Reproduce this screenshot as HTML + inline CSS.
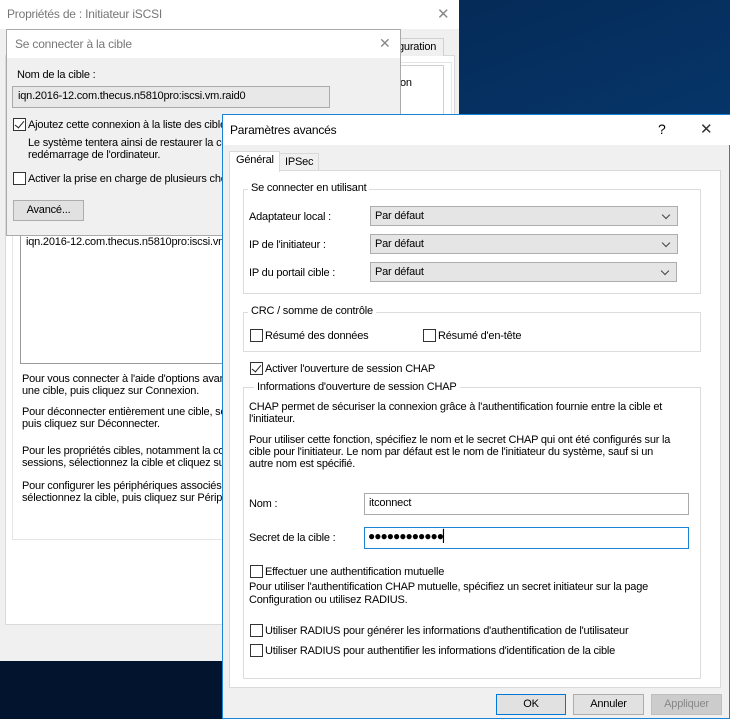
<!DOCTYPE html>
<html><head><meta charset="utf-8">
<style>
*{margin:0;padding:0;box-sizing:border-box}
body{width:730px;height:719px;overflow:hidden;position:relative;font-family:"Liberation Sans",sans-serif;font-size:11px;letter-spacing:-0.2px;color:#000;background:linear-gradient(160deg,#04234a 0%,#06386e 45%,#0a5aa6 100%)}
.a{position:absolute;white-space:nowrap}
.box{position:absolute}
.cb{position:absolute;width:13px;height:13px;border:1px solid #333;background:#fff}
.cb.on::after{content:"";position:absolute;left:3px;top:0px;width:4px;height:8px;border:solid #222;border-width:0 1.5px 1.5px 0;transform:rotate(40deg)}
.grp{position:absolute;border:1px solid #dcdcdc}
.lg{position:absolute;background:#fff;padding:0 3px;white-space:nowrap}
.combo{position:absolute;background:#e5e5e5;border:1px solid #adadad;height:20px;padding:3px 4px 0}
.combo::after{content:"";position:absolute;right:8px;top:5px;width:5px;height:5px;border:solid #444;border-width:0 1px 1px 0;transform:rotate(45deg)}
.btn{position:absolute;background:#e1e1e1;border:1px solid #adadad;height:21px;text-align:center;line-height:19px}
</style></head><body>
<!-- back window -->
<div class="box" style="left:0;top:0;width:459px;height:661px;background:#f0f0f0"></div>
<div class="box" style="left:0;top:0;width:459px;height:29px;background:#fff"></div>
<div class="a" style="left:7px;top:7px;font-size:12px;color:#777">Propriétés de : Initiateur iSCSI</div>
<div class="a" style="left:437px;top:5px;font-size:15px;color:#888">✕</div>
<div class="box" style="left:5px;top:55px;width:450px;height:570px;background:#fff;border:1px solid #d9d9d9"></div>
<div class="box" style="left:392px;top:38px;width:52px;height:18px;background:#f0f0f0;border:1px solid #d0d0d0;border-bottom:none"></div>
<div class="a" style="left:398px;top:41px">guration</div>
<div class="box" style="left:12px;top:62px;width:440px;height:478px;border:1px solid #e5e5e5"></div>
<div class="box" style="left:392px;top:65px;width:52px;height:268px;border:1px solid #d0d0d0"></div>
<div class="a" style="left:400px;top:77px">on</div>
<div class="box" style="left:20px;top:228px;width:210px;height:136px;background:#fff;border:1px solid #999"></div>
<div class="a" style="left:26px;top:236px">iqn.2016-12.com.thecus.n5810pro:iscsi.vm</div>
<div class="a" style="left:22px;top:373px;line-height:12px">Pour vous connecter à l'aide d'options avan<br>une cible, puis cliquez sur Connexion.</div>
<div class="a" style="left:22px;top:406px;line-height:12px">Pour déconnecter entièrement une cible, sé<br>puis cliquez sur Déconnecter.</div>
<div class="a" style="left:22px;top:445px;line-height:12px">Pour les propriétés cibles, notamment la cor<br>sessions, sélectionnez la cible et cliquez sur</div>
<div class="a" style="left:22px;top:480px;line-height:12px">Pour configurer les périphériques associés à<br>sélectionnez la cible, puis cliquez sur Périphe</div>
<div class="box" style="left:0;top:661px;width:222px;height:58px;background:#02142e"></div>

<!-- se connecter dialog -->
<div class="box" style="left:6px;top:29px;width:395px;height:207px;background:#f0f0f0;border:1px solid #aaa"></div>
<div class="box" style="left:7px;top:30px;width:393px;height:28px;background:#fff"></div>
<div class="a" style="left:15px;top:37px;font-size:12px;color:#777">Se connecter à la cible</div>
<div class="a" style="left:379px;top:35px;font-size:14px;color:#888">✕</div>
<div class="a" style="left:17px;top:69px">Nom de la cible :</div>
<div class="box" style="left:12px;top:86px;width:318px;height:22px;background:#e8e8e8;border:1px solid #aaa"></div>
<div class="a" style="left:18px;top:90px">iqn.2016-12.com.thecus.n5810pro:iscsi.vm.raid0</div>
<div class="cb on" style="left:13px;top:118px"></div>
<div class="a" style="left:28px;top:119px">Ajoutez cette connexion à la liste des cible</div>
<div class="a" style="left:28px;top:137px;line-height:12px">Le système tentera ainsi de restaurer la co<br>redémarrage de l'ordinateur.</div>
<div class="cb" style="left:13px;top:172px"></div>
<div class="a" style="left:28px;top:173px">Activer la prise en charge de plusieurs che</div>
<div class="btn" style="left:13px;top:200px;width:71px">Avancé...</div>

<!-- parametres avances -->
<div class="box" style="left:222px;top:114px;width:508px;height:605px;background:#f0f0f0;border:1px solid #1883d7"></div>
<div class="box" style="left:223px;top:115px;width:507px;height:30px;background:#fff"></div>
<div class="a" style="left:230px;top:123px;font-size:12px">Paramètres avancés</div>
<div class="a" style="left:658px;top:121px;font-size:14px">?</div>
<div class="a" style="left:700px;top:120px;font-size:15px;color:#333">✕</div>
<div class="box" style="left:229px;top:170px;width:492px;height:518px;background:#fff;border:1px solid #d9d9d9"></div>
<div class="box" style="left:279px;top:153px;width:40px;height:18px;background:#f0f0f0;border:1px solid #d9d9d9"></div>
<div class="a" style="left:285px;top:156px">IPSec</div>
<div class="box" style="left:229px;top:151px;width:51px;height:21px;background:#fff;border:1px solid #d9d9d9;border-bottom:none"></div>
<div class="a" style="left:236px;top:154px">Général</div>

<div class="grp" style="left:243px;top:189px;width:458px;height:105px"></div>
<div class="lg" style="left:248px;top:182px">Se connecter en utilisant</div>
<div class="a" style="left:249px;top:211px">Adaptateur local :</div>
<div class="a" style="left:249px;top:239px">IP de l'initiateur :</div>
<div class="a" style="left:249px;top:267px">IP du portail cible :</div>
<div class="combo" style="left:370px;top:206px;width:308px">Par défaut</div>
<div class="combo" style="left:370px;top:234px;width:308px">Par défaut</div>
<div class="combo" style="left:370px;top:262px;width:307px">Par défaut</div>

<div class="grp" style="left:243px;top:312px;width:458px;height:40px"></div>
<div class="lg" style="left:248px;top:305px">CRC / somme de contrôle</div>
<div class="cb" style="left:250px;top:329px"></div>
<div class="a" style="left:265px;top:330px">Résumé des données</div>
<div class="cb" style="left:423px;top:329px"></div>
<div class="a" style="left:438px;top:330px">Résumé d'en-tête</div>

<div class="cb on" style="left:250px;top:362px"></div>
<div class="a" style="left:265px;top:363px">Activer l'ouverture de session CHAP</div>

<div class="grp" style="left:243px;top:387px;width:458px;height:292px"></div>
<div class="lg" style="left:254px;top:381px">Informations d'ouverture de session CHAP</div>
<div class="a" style="left:249px;top:401px;line-height:12px">CHAP permet de sécuriser la connexion grâce à l'authentification fournie entre la cible et<br>l'initiateur.</div>
<div class="a" style="left:249px;top:434px;line-height:12px">Pour utiliser cette fonction, spécifiez le nom et le secret CHAP qui ont été configurés sur la<br>cible pour l'initiateur. Le nom par défaut est le nom de l'initiateur du système, sauf si un<br>autre nom est spécifié.</div>
<div class="a" style="left:249px;top:498px">Nom :</div>
<div class="box" style="left:364px;top:493px;width:325px;height:22px;border:1px solid #aaa;background:#fff"></div>
<div class="a" style="left:369px;top:497px">itconnect</div>
<div class="a" style="left:249px;top:532px">Secret de la cible :</div>
<div class="box" style="left:364px;top:527px;width:325px;height:22px;border:1px solid #1883d7;background:#fff"></div>
<div class="a" style="left:368px;top:529px;font-size:12px;letter-spacing:-1px">●●●●●●●●●●●●▏</div>
<div class="cb" style="left:250px;top:565px"></div>
<div class="a" style="left:265px;top:566px">Effectuer une authentification mutuelle</div>
<div class="a" style="left:249px;top:581px;line-height:13px">Pour utiliser l'authentification CHAP mutuelle, spécifiez un secret initiateur sur la page<br>Configuration ou utilisez RADIUS.</div>
<div class="cb" style="left:250px;top:624px"></div>
<div class="a" style="left:265px;top:625px">Utiliser RADIUS pour générer les informations d'authentification de l'utilisateur</div>
<div class="cb" style="left:250px;top:644px"></div>
<div class="a" style="left:265px;top:645px">Utiliser RADIUS pour authentifier les informations d'identification de la cible</div>

<div class="btn" style="left:496px;top:694px;width:70px;border:1px solid #0078d7">OK</div>
<div class="btn" style="left:573px;top:694px;width:71px">Annuler</div>
<div class="btn" style="left:651px;top:694px;width:71px;background:#ccc;border-color:#bfbfbf;color:#888">Appliquer</div>
</body></html>
